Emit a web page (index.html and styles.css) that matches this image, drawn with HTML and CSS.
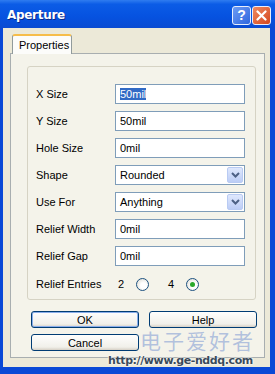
FILE: index.html
```html
<!DOCTYPE html>
<html lang="en">
<head>
    <meta charset="UTF-8">
    <title>Aperture</title>
    <link rel="stylesheet" href="styles.css">
</head>
<body>
    <div class="window">
        <div class="titlebar">
            <span class="title">Aperture</span>
            <div class="title-buttons">
                <span class="tbtn help-btn">?</span>
                <span class="tbtn close-btn">
                    <svg width="11" height="11" viewBox="0 0 11 11"><path d="M1.5 1.5 L9.5 9.5 M9.5 1.5 L1.5 9.5" stroke="#fff" stroke-width="2.2" stroke-linecap="round"/></svg>
                </span>
            </div>
        </div>

        <div class="client">
            <div class="tabs">
                <div class="tab active">Properties</div>
            </div>
            <div class="panel">
                <div class="group">
                    <div class="row">
                        <label>X Size</label>
                        <div class="field"><span class="selected">50mil</span></div>
                    </div>
                    <div class="row">
                        <label>Y Size</label>
                        <div class="field">50mil</div>
                    </div>
                    <div class="row">
                        <label>Hole Size</label>
                        <div class="field">0mil</div>
                    </div>
                    <div class="row">
                        <label>Shape</label>
                        <div class="field combo">Rounded<span class="drop"><svg width="9" height="6" viewBox="0 0 9 6"><path d="M1 1 L4.5 4.5 L8 1" fill="none" stroke="#4d6185" stroke-width="2"/></svg></span></div>
                    </div>
                    <div class="row">
                        <label>Use For</label>
                        <div class="field combo">Anything<span class="drop"><svg width="9" height="6" viewBox="0 0 9 6"><path d="M1 1 L4.5 4.5 L8 1" fill="none" stroke="#4d6185" stroke-width="2"/></svg></span></div>
                    </div>
                    <div class="row">
                        <label>Relief Width</label>
                        <div class="field">0mil</div>
                    </div>
                    <div class="row">
                        <label>Relief Gap</label>
                        <div class="field">0mil</div>
                    </div>
                    <div class="row radio-row">
                        <label>Relief Entries</label>
                        <span class="opt">2</span>
                        <span class="radio"></span>
                        <span class="opt">4</span>
                        <span class="radio checked"></span>
                    </div>
                </div>

                <div class="buttons">
                    <button class="btn default">OK</button>
                    <button class="btn">Help</button>
                    <button class="btn">Cancel</button>
                </div>
            </div>
        </div>

        <div class="watermark">
            <span class="wm-cn">电子爱好者</span>
            <span class="wm-url">http://www.ge-nddq.com</span>
        </div>
    </div>
</body>
</html>
```

FILE: styles.css
```css
body {
    margin: 0;
    font-family: 'Liberation Sans', Arial, sans-serif;
    font-size: 11px;
    color: #000;
    background: #fff;
}

.window {
    position: relative;
    width: 275px;
    height: 374px;
    box-sizing: border-box;
    background: #0a49d6;
    padding: 0 5px 7px 3px;
    display: flex;
    flex-direction: column;
    overflow: hidden;
}

/* title bar */
.titlebar {
    flex: none;
    height: 28px;
    margin: 0 -5px 0 -3px;
    padding: 0 4px 0 7px;
    display: flex;
    align-items: center;
    justify-content: space-between;
    background: linear-gradient(#2f7cf0 0%, #0b5ce6 15%, #0652e0 60%, #0a4bd2 100%);
}

.title {
    color: #fff;
    font-family: 'DejaVu Sans', sans-serif;
    font-weight: bold;
    font-size: 12px;
    letter-spacing: -0.3px;
    text-shadow: 1px 1px #0a2a8a;
    margin-top: 1px;
}

.title-buttons {
    display: flex;
    gap: 1px;
    margin-top: 2px;
}

.tbtn {
    width: 19px;
    height: 19px;
    box-sizing: border-box;
    border: 1px solid #e8eefc;
    border-radius: 3px;
    display: flex;
    align-items: center;
    justify-content: center;
    color: #fff;
    font-weight: bold;
    font-size: 14px;
}

.help-btn {
    background: linear-gradient(135deg, #6d9cf4, #2f66de);
}

.close-btn {
    background: linear-gradient(135deg, #ee8a62, #d5471d);
}

/* client area */
.client {
    flex: 1;
    min-height: 0;
    background: #ece9d8;
    padding: 6px 5px 9px 7px;
    display: flex;
    flex-direction: column;
}

.tabs {
    display: flex;
    padding-left: 2px;
    margin-bottom: -1px;
    position: relative;
    z-index: 1;
}

.tab {
    width: 60px;
    height: 20px;
    box-sizing: border-box;
    border: 1px solid #919b9c;
    border-bottom: none;
    border-top: 2px solid #f6bd4a;
    border-radius: 3px 3px 0 0;
    background: #fcfcfa;
    padding: 3px 0 0 6px;
}

.panel {
    flex: 1;
    min-height: 0;
    border: 1px solid #a8aeb0;
    background: #f4f3ea;
    padding: 12px 8px 0 16px;
    display: flex;
    flex-direction: column;
}

.group {
    border: 1px solid #d6d3c4;
    border-radius: 3px;
    padding: 17px 10px 7px 8px;
    display: flex;
    flex-direction: column;
    gap: 7px;
}

.row {
    display: flex;
    align-items: center;
    height: 20px;
}

.row label {
    width: 79px;
    flex: none;
}

.field {
    flex: 1;
    height: 20px;
    box-sizing: border-box;
    border: 1px solid #7f9db9;
    background: #fff;
    padding: 0 4px;
    display: flex;
    align-items: center;
}

.selected {
    background: #316ac5;
    color: #fff;
}

.combo {
    justify-content: space-between;
    padding-right: 1px;
}

.drop {
    width: 16px;
    height: 16px;
    box-sizing: border-box;
    border: 1px solid #b9cbf3;
    border-radius: 2px;
    background: linear-gradient(#dfe8fd, #bccdf6);
    display: flex;
    align-items: center;
    justify-content: center;
}

.radio-row {
    height: 16px;
    margin-top: 3px;
}

.radio-row label {
    width: 82px;
}

.opt {
    width: 18px;
}

.radio {
    width: 13px;
    height: 13px;
    box-sizing: border-box;
    border: 1px solid #1c5180;
    border-radius: 50%;
    background: radial-gradient(circle at 60% 60%, #fff 30%, #d8d6cc 100%);
    margin-right: 19px;
    display: flex;
    align-items: center;
    justify-content: center;
}

.radio.checked::after {
    content: "";
    width: 5px;
    height: 5px;
    border-radius: 50%;
    background: #29a829;
}

/* buttons */
.buttons {
    display: grid;
    grid-template-columns: 108px 108px;
    column-gap: 10px;
    row-gap: 6px;
    margin: 11px 0 0 4px;
}

.btn {
    height: 17px;
    padding: 0;
    font-family: 'Liberation Sans', Arial, sans-serif;
    font-size: 11px;
    color: #000;
    border: 1px solid #003c74;
    border-radius: 3px;
    background: linear-gradient(#fefefd, #f1f0ea 80%, #d6d0c5);
}

.btn.default {
    box-shadow: inset 0 0 0 1px #8aaeea;
}

/* watermark */
.watermark {
    position: absolute;
    left: 108px;
    top: 329px;
    width: 166px;
    pointer-events: none;
}

.wm-cn {
    display: block;
    margin-left: 32px;
    font-family: 'Noto Sans CJK SC', sans-serif;
    font-size: 21px;
    line-height: 23px;
    letter-spacing: 2px;
    color: rgba(120, 150, 210, 0.55);
}

.wm-url {
    display: block;
    margin-top: 2px;
    font-family: 'DejaVu Sans', sans-serif;
    font-weight: bold;
    font-size: 11px;
    line-height: 13px;
    letter-spacing: -0.4px;
    color: #3a4a5a;
    text-shadow: 0 0 2px #fff, 0 0 2px #fff;
}
```
